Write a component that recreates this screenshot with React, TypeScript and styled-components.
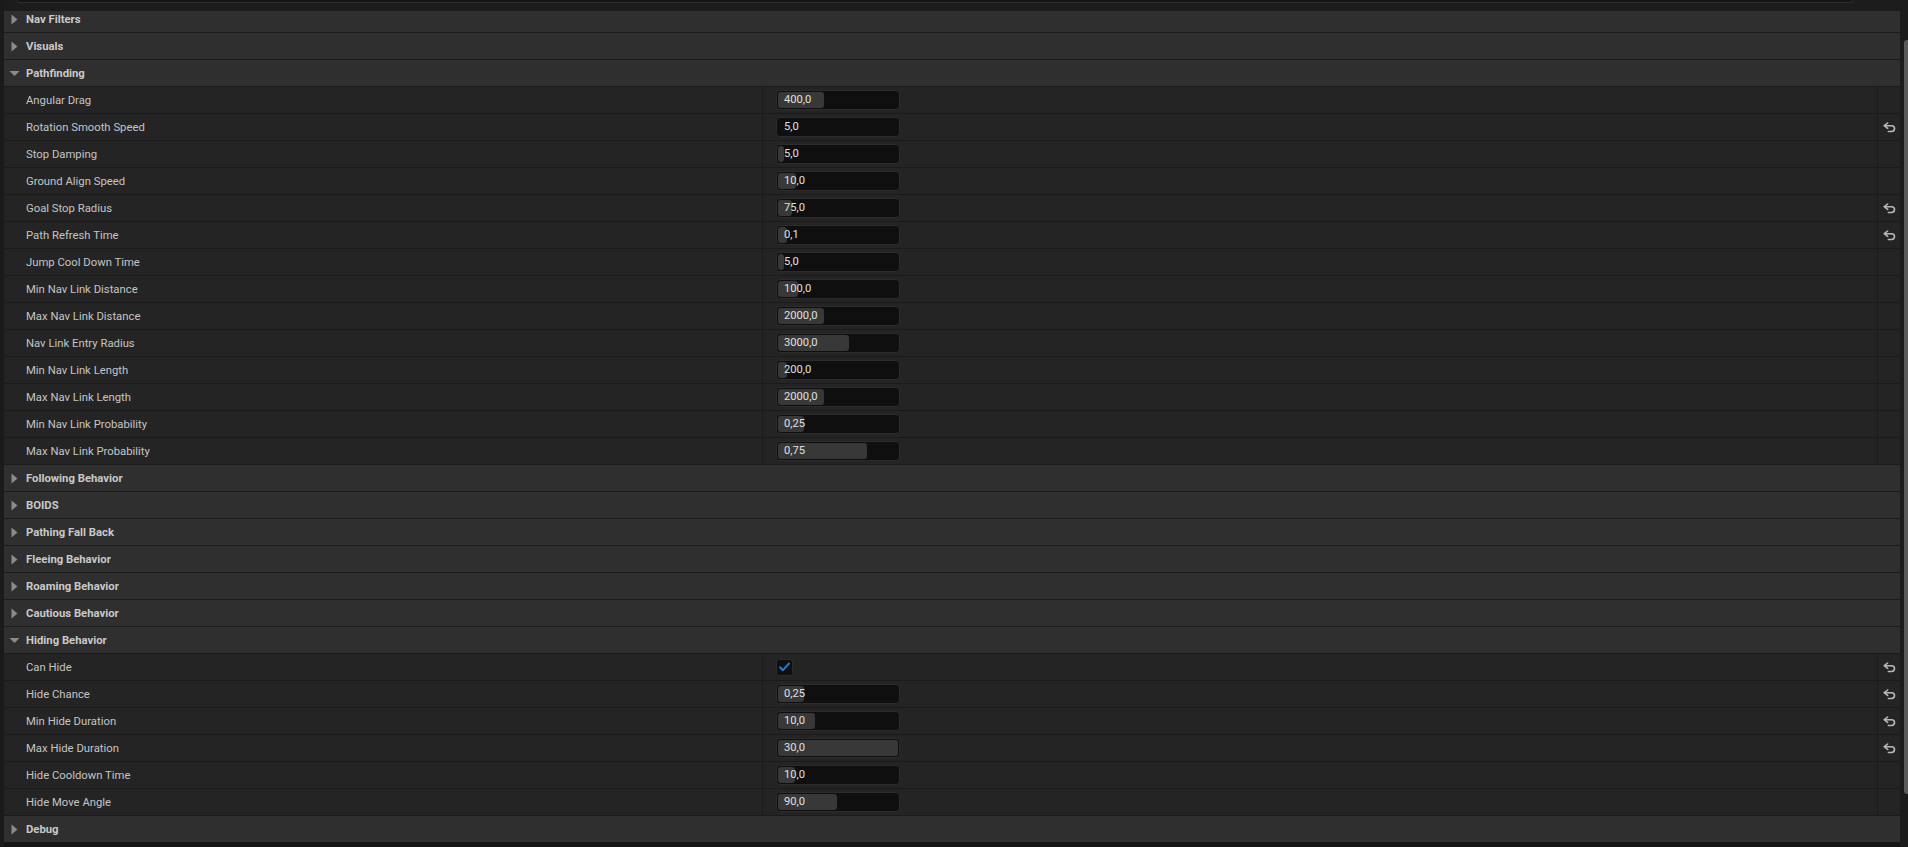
import React from 'react';
import styled, { createGlobalStyle } from 'styled-components';

const GlobalStyle = createGlobalStyle`
  html, body {
    margin: 0;
    padding: 0;
    background: #1a1a1a;
    overflow: hidden;
  }
  * {
    box-sizing: border-box;
  }
`;

type Prop = {
  label: string;
  value?: string;
  fill?: number;
  check?: boolean;
  reset?: boolean;
};

type Section = {
  title: string;
  open?: boolean;
  props?: Prop[];
};

const sections: Section[] = [
  { title: 'Nav Filters' },
  { title: 'Visuals' },
  {
    title: 'Pathfinding',
    open: true,
    props: [
      { label: 'Angular Drag', value: '400,0', fill: 0.38 },
      { label: 'Rotation Smooth Speed', value: '5,0', fill: 0, reset: true },
      { label: 'Stop Damping', value: '5,0', fill: 0.05 },
      { label: 'Ground Align Speed', value: '10,0', fill: 0.15 },
      { label: 'Goal Stop Radius', value: '75,0', fill: 0.12, reset: true },
      { label: 'Path Refresh Time', value: '0,1', fill: 0.075, reset: true },
      { label: 'Jump Cool Down Time', value: '5,0', fill: 0.05 },
      { label: 'Min Nav Link Distance', value: '100,0', fill: 0.17 },
      { label: 'Max Nav Link Distance', value: '2000,0', fill: 0.38 },
      { label: 'Nav Link Entry Radius', value: '3000,0', fill: 0.59 },
      { label: 'Min Nav Link Length', value: '200,0', fill: 0.075 },
      { label: 'Max Nav Link Length', value: '2000,0', fill: 0.38 },
      { label: 'Min Nav Link Probability', value: '0,25', fill: 0.22 },
      { label: 'Max Nav Link Probability', value: '0,75', fill: 0.74 },
    ],
  },
  { title: 'Following Behavior' },
  { title: 'BOIDS' },
  { title: 'Pathing Fall Back' },
  { title: 'Fleeing Behavior' },
  { title: 'Roaming Behavior' },
  { title: 'Cautious Behavior' },
  {
    title: 'Hiding Behavior',
    open: true,
    props: [
      { label: 'Can Hide', check: true, reset: true },
      { label: 'Hide Chance', value: '0,25', fill: 0.22, reset: true },
      { label: 'Min Hide Duration', value: '10,0', fill: 0.31, reset: true },
      { label: 'Max Hide Duration', value: '30,0', fill: 1, reset: true },
      { label: 'Hide Cooldown Time', value: '10,0', fill: 0.14 },
      { label: 'Hide Move Angle', value: '90,0', fill: 0.49 },
    ],
  },
  { title: 'Debug' },
];

const Page = styled.div`
  display: flex;
  height: 847px;
  width: 100%;
  background: #1a1a1a;
  font-family: Roboto, 'Noto Sans', sans-serif;
`;

const Main = styled.div`
  flex: 1;
  display: flex;
  flex-direction: column;
  padding-left: 4px;
  min-width: 0;
`;

const TopStub = styled.div`
  height: 11px;
  flex: none;
  padding: 0 47px 0 13px;
  background: #1c1c1c;
`;

const PrevPanel = styled.div`
  height: 3px;
  background: #131313;
  border: 1px solid #2e2e2e;
  border-top: none;
  border-radius: 0 0 4px 4px;
`;

const Viewport = styled.div`
  flex: 1;
  overflow: hidden;
`;

// content scrolled by a few pixels, as in the editor
const List = styled.div`
  margin-top: -5px;
`;

const BottomGap = styled.div`
  height: 5px;
  flex: none;
  background: #151515;
`;

const ScrollTrack = styled.div`
  width: 8px;
  flex: none;
  background: #1c1c1c;
  display: flex;
  justify-content: flex-end;
  padding-top: 40px;
`;

const ScrollThumb = styled.div`
  width: 4px;
  height: 754px;
  background: #5a5a5a;
  border-radius: 3px 0 0 3px;
`;

const CategoryRow = styled.div`
  height: 27px;
  display: flex;
  align-items: center;
  background: #2f2f2f;
  border-bottom: 1px solid #1b1b1b;
  color: #c9c9c9;
  font-size: 11.3px;
  font-weight: 700;
`;

const ArrowCell = styled.div`
  width: 22px;
  height: 100%;
  display: flex;
  align-items: center;
  padding-left: 5px;
  flex: none;
`;

const PropRow = styled.div`
  height: 27px;
  display: flex;
  background: #242424;
  border-bottom: 1px solid #1b1b1b;
`;

const NameCell = styled.div`
  width: 759px;
  flex: none;
  display: flex;
  align-items: center;
  padding-left: 22px;
  border-right: 1px solid #1b1b1b;
  color: #c4c4c4;
  font-size: 11.3px;
`;

const ValueCell = styled.div`
  flex: 1;
  display: flex;
  align-items: center;
  padding-left: 13px;
  border-right: 1px solid #1b1b1b;
`;

const ResetCell = styled.div`
  width: 22px;
  flex: none;
  display: flex;
  align-items: center;
  justify-content: center;
  padding-left: 1px;
`;

const NumberBox = styled.div`
  position: relative;
  width: 124px;
  height: 20px;
  background: #0f0f0f;
  border: 1px solid #2c2c2c;
  border-radius: 4px;
  display: flex;
  align-items: center;
  padding-left: 7px;
  overflow: hidden;
`;

const Fill = styled.div`
  position: absolute;
  left: 1px;
  top: 1px;
  bottom: 1px;
  background: #383838;
  border-radius: 3px;
`;

const NumberText = styled.span`
  position: relative;
  color: #e0e0e0;
  font-size: 11.2px;
  line-height: 1;
`;

const CheckBox = styled.div`
  width: 17px;
  height: 17px;
  background: #0f0f0f;
  border: 1px solid #2c2c2c;
  border-radius: 3px;
  display: flex;
  align-items: center;
  justify-content: center;
`;

const Arrow = ({ open }: { open?: boolean }) => (
  <svg width="11" height="11" viewBox="0 0 11 11">
    {open ? (
      <path d="M0.5 3 L10.5 3 L5.5 8 Z" fill="#8c8c8c" />
    ) : (
      <path d="M2.5 0.5 L8.5 5.5 L2.5 10.5 Z" fill="#8c8c8c" />
    )}
  </svg>
);

const ResetIcon = () => (
  <svg width="13" height="11" viewBox="0 0 13 11" fill="none">
    <path d="M4.6 1 L1.3 3.7 L4.6 6.4" stroke="#b8b8b8" strokeWidth="1.6" strokeLinejoin="round" strokeLinecap="round" />
    <path d="M1.6 3.7 H8.6 A2.9 2.9 0 0 1 8.6 9.5 H5.4" stroke="#b8b8b8" strokeWidth="1.6" strokeLinecap="round" />
  </svg>
);

const Check = () => (
  <svg width="11" height="10" viewBox="0 0 11 10" fill="none">
    <path d="M1 5.2 L4 8.2 L10 1.5" stroke="#1f78e0" strokeWidth="2" strokeLinecap="round" strokeLinejoin="round" />
  </svg>
);

const PropertyRow = ({ prop }: { prop: Prop }) => (
  <PropRow>
    <NameCell>{prop.label}</NameCell>
    <ValueCell>
      {prop.check ? (
        <CheckBox>
          <Check />
        </CheckBox>
      ) : (
        <NumberBox>
          {prop.fill ? <Fill style={{ width: `calc((100% - 2px) * ${prop.fill})` }} /> : null}
          <NumberText>{prop.value}</NumberText>
        </NumberBox>
      )}
    </ValueCell>
    <ResetCell>{prop.reset && <ResetIcon />}</ResetCell>
  </PropRow>
);

const App: React.FC = () => {
  return (
    <>
      <GlobalStyle />
      <Page>
        <Main>
          <TopStub>
            <PrevPanel />
          </TopStub>
          <Viewport>
            <List>
              {sections.map(section => (
                <React.Fragment key={section.title}>
                  <CategoryRow>
                    <ArrowCell>
                      <Arrow open={section.open} />
                    </ArrowCell>
                    {section.title}
                  </CategoryRow>
                  {section.open &&
                    section.props?.map(p => <PropertyRow key={p.label} prop={p} />)}
                </React.Fragment>
              ))}
            </List>
          </Viewport>
          <BottomGap />
        </Main>
        <ScrollTrack>
          <ScrollThumb />
        </ScrollTrack>
      </Page>
    </>
  );
};

export default App;
